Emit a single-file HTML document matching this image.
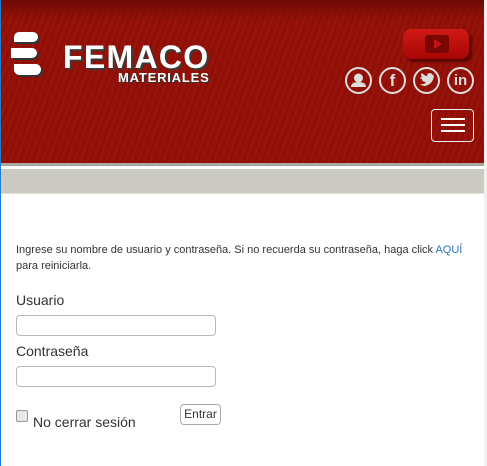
<!DOCTYPE html>
<html><head><meta charset="utf-8"><style>
*{margin:0;padding:0;box-sizing:border-box}
body{width:487px;height:466px;overflow:hidden;background:#fff;font-family:"Liberation Sans",Arial,sans-serif;position:relative}
.lb{position:absolute;left:0;top:0;width:1px;height:466px;background:#1a7fd4;z-index:5}
.sb{position:absolute;right:0;top:0;width:3px;height:466px;background:#f0f0f0}
.hdr{position:absolute;left:0;top:0;width:484px;height:163px;background:repeating-linear-gradient(110deg,#8e0f08 0 3px,#971309 3px 6px);}
.hdr:before{content:"";position:absolute;left:0;top:0;right:0;height:20px;background:linear-gradient(#6e0a05,rgba(0,0,0,0))}
.line{position:absolute;left:0;top:163px;width:484px;height:3px;background:#a9a79c}
.band{position:absolute;left:0;top:169px;width:484px;height:25px;background:#cccbc3;border-bottom:1px solid #e2e1da}
.t{position:absolute;color:#fff;font-weight:bold;text-shadow:2px 2px 0 #3a3a3a}
.ic{position:absolute;top:67px;width:27px;height:27px;border:2px solid #ddd;border-radius:50%;color:#ddd;font-weight:bold;text-align:center;line-height:23px;font-size:17px}
.txt{position:absolute;left:16px;top:242px;font-size:11px;color:#333;line-height:16px}
.lab{position:absolute;left:16px;font-size:14px;color:#333}
.inp{position:absolute;left:16px;width:200px;height:21px;border:1px solid #b8b8b8;border-radius:4px}
</style></head><body>
<div class="lb"></div><div class="sb"></div>
<div class="hdr">
 <div style="position:absolute;left:14px;top:32px;width:24px;height:10px;background:#fff;border-radius:6px 6px 6px 0;box-shadow:2px 2px 0 #333"></div>
 <div style="position:absolute;left:11px;top:48px;width:26px;height:10px;background:#fff;border-radius:0 6px 6px 0;box-shadow:2px 2px 0 #333"></div>
 <div style="position:absolute;left:14px;top:64px;width:27px;height:11px;background:#fff;border-radius:0 6px 6px 6px;box-shadow:2px 2px 0 #333"></div>
 <div class="t" style="left:63px;top:41px;font-size:32px;letter-spacing:1.3px;line-height:32px">FEMACO</div>
 <div class="t" style="left:118px;top:70px;font-size:13px;letter-spacing:0.8px;text-shadow:1px 1px 0 #333">MATERIALES</div>
 <div style="position:absolute;left:403px;top:29px;width:66px;height:30px;background:linear-gradient(#d01a16,#a70604);border-radius:8px;box-shadow:3px 3px 2px #5a0503"></div>
 <div style="position:absolute;left:425px;top:35px;width:24px;height:18px;background:#7a0704;border-radius:3px"></div>
 <div style="position:absolute;left:434px;top:39px;width:0;height:0;border-left:8px solid #c21510;border-top:5px solid transparent;border-bottom:5px solid transparent"></div>
 <div class="ic" style="left:345px"><svg width="23" height="23" viewBox="0 0 23 23"><circle cx="11.5" cy="9" r="4.5" fill="#ddd"/><path d="M4 18 Q4 13 11.5 13 Q19 13 19 18Z" fill="#ddd"/></svg></div>
 <div class="ic" style="left:379px;font-family:'Liberation Sans'">f</div>
 <div class="ic" style="left:413px"><svg width="23" height="23" viewBox="0 0 23 23"><path d="M5 15 Q9 16 11 13 Q7 13 7 10 Q5 10 5 8 Q6 9 7 8 Q5 6 7 4 Q10 7 12 7 Q12 4 15 4 Q17 4 17 6 L19 5 L18 7 L19 7 Q18 15 10 17 Q7 17 5 15Z" fill="#ddd"/></svg></div>
 <div class="ic" style="left:447px;font-size:15px">in</div>
 <div style="position:absolute;left:431px;top:109px;width:43px;height:33px;border:1px solid #eee;border-radius:4px"></div>
 <div style="position:absolute;left:441px;top:118px;width:24px;height:2px;background:#fff;box-shadow:0 6px 0 #fff,0 12px 0 #fff"></div>
</div>
<div class="line"></div>
<div class="band"></div>
<div class="txt">Ingrese su nombre de usuario y contraseña. Si no recuerda su contraseña, haga click <span style="color:#2a6fc7">AQUÍ</span><br>para reiniciarla.</div>
<div class="lab" style="top:292px">Usuario</div>
<div class="inp" style="top:315px"></div>
<div class="lab" style="top:343px">Contraseña</div>
<div class="inp" style="top:366px"></div>
<div style="position:absolute;left:16px;top:410px;width:12px;height:12px;border:1px solid #999;border-radius:2px;background:#e8e8e8"></div>
<div class="lab" style="left:33px;top:414px">No cerrar sesión</div>
<div style="position:absolute;left:180px;top:404px;width:41px;height:21px;border:1px solid #aaa;border-radius:4px;font-size:12px;color:#333;text-align:center;line-height:19px">Entrar</div>
</body></html>
